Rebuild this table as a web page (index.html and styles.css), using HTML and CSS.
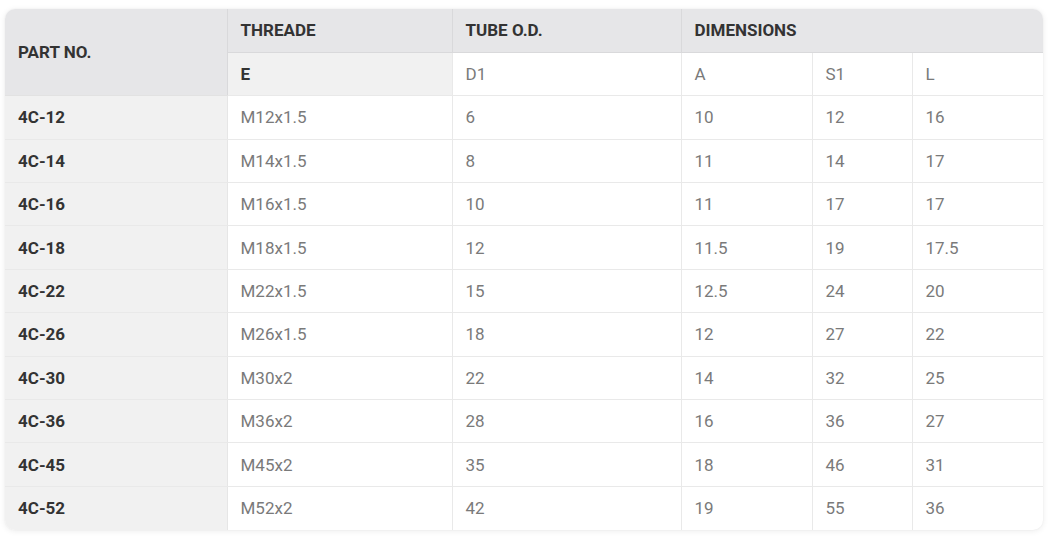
FILE: index.html
```html
<!DOCTYPE html>
<html>
<head>
<meta charset="utf-8">
<link rel="stylesheet" href="styles.css">
</head>
<body>
<div class="wrap">
<table class="spec">
<colgroup>
<col class="c1"><col class="c2"><col class="c3"><col class="c4"><col class="c5"><col class="c6">
</colgroup>
<thead>
<tr class="h1">
<th rowspan="2" class="part">PART NO.</th>
<th>THREADE</th>
<th>TUBE O.D.</th>
<th colspan="3">DIMENSIONS</th>
</tr>
<tr class="h2">
<th class="sub strong">E</th>
<td>D1</td>
<td>A</td>
<td>S1</td>
<td>L</td>
</tr>
</thead>
<tbody>
<tr><th>4C-12</th><td>M12x1.5</td><td>6</td><td>10</td><td>12</td><td>16</td></tr>
<tr><th>4C-14</th><td>M14x1.5</td><td>8</td><td>11</td><td>14</td><td>17</td></tr>
<tr><th>4C-16</th><td>M16x1.5</td><td>10</td><td>11</td><td>17</td><td>17</td></tr>
<tr><th>4C-18</th><td>M18x1.5</td><td>12</td><td>11.5</td><td>19</td><td>17.5</td></tr>
<tr><th>4C-22</th><td>M22x1.5</td><td>15</td><td>12.5</td><td>24</td><td>20</td></tr>
<tr><th>4C-26</th><td>M26x1.5</td><td>18</td><td>12</td><td>27</td><td>22</td></tr>
<tr><th>4C-30</th><td>M30x2</td><td>22</td><td>14</td><td>32</td><td>25</td></tr>
<tr><th>4C-36</th><td>M36x2</td><td>28</td><td>16</td><td>36</td><td>27</td></tr>
<tr><th>4C-45</th><td>M45x2</td><td>35</td><td>18</td><td>46</td><td>31</td></tr>
<tr><th>4C-52</th><td>M52x2</td><td>42</td><td>19</td><td>55</td><td>36</td></tr>
</tbody>
</table>
</div>
</body>
</html>
```

FILE: styles.css
```css
html, body {
  margin: 0;
  padding: 0;
  background: #ffffff;
}
body {
  padding: 9px 7px 12px 5px;
  font-family: Roboto, "Liberation Sans", Arial, sans-serif;
}
.wrap {
  width: 1038px;
  border-radius: 10px;
  overflow: hidden;
  box-shadow: 0 1px 6px rgba(0, 0, 0, 0.08), 0 0 2px rgba(0, 0, 0, 0.05);
  background: #fff;
}
.spec {
  width: 1038px;
  border-collapse: collapse;
  table-layout: fixed;
  font-size: 17px;
}
.c1 { width: 222px; }
.c2 { width: 225px; }
.c3 { width: 229px; }
.c4 { width: 131px; }
.c5 { width: 100px; }
.c6 { width: 131px; }
.spec th, .spec td {
  text-align: left;
  vertical-align: middle;
  padding: 0 13px;
  height: 43.4px;
  box-sizing: border-box;
  border: 1px solid #e9e9e9;
  line-height: 20px;
}
.spec tr:first-child > * { border-top: none; }
.spec tr > *:first-child { border-left: none; }
.spec tr > *:last-child { border-right: none; }
.spec tbody tr:last-child > * { border-bottom: none; }
.spec td {
  color: #7a7a7a;
  font-weight: 400;
}
.spec th {
  color: #333333;
  font-weight: 700;
  background: #f1f1f1;
}
.h1 th {
  background: #e6e6e8;
  border-color: #d9d9db;
  font-weight: 700;
  color: #333;
}
.h1 th.part { border-bottom-color: #e2e2e2; }
.h2 > * { border-top-color: #d9d9db; }
.h2 .sub {
  background: #f1f1f1;
}
.h2 td { background: #fff; }
.spec tbody th { border-right-color: #e6e6e6; }
```
